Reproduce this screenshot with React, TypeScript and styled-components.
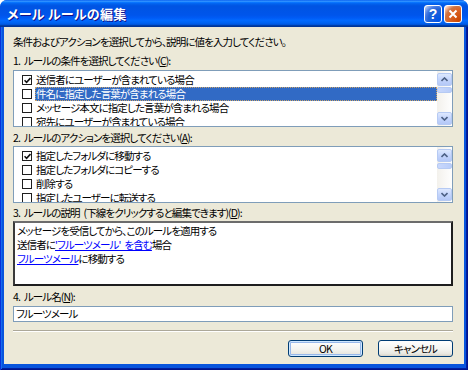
import styled, { createGlobalStyle } from 'styled-components';

const GlobalStyle = createGlobalStyle`
    html, body {
        margin: 0;
        padding: 0;
        background: #ffffff;
    }

    body {
        font-family: 'Noto Sans CJK JP', 'Liberation Sans', sans-serif;
        font-size: 10.5px;
        letter-spacing: -0.9px;
        word-spacing: 2.5px;
        font-feature-settings: 'palt';
        color: #000;
    }
`;

const Window = styled.div`
    width: 468px;
    height: 370px;
    display: flex;
    flex-direction: column;
    border-radius: 7px 7px 0 0;
    overflow: hidden;
    background: #0855dd;
`;

const TitleBar = styled.div`
    height: 27px;
    flex-shrink: 0;
    display: flex;
    align-items: center;
    gap: 2px;
    padding: 0 6px 0 7px;
    background: linear-gradient(
        180deg,
        #0058ee 0%,
        #3593ff 4%,
        #288eff 6%,
        #127dff 8%,
        #036ffc 10%,
        #0262ee 14%,
        #0057e5 20%,
        #0054e3 24%,
        #0055eb 56%,
        #005bf5 66%,
        #026afe 76%,
        #0062ef 86%,
        #0052d6 92%,
        #0040ab 94%,
        #003092 100%
    );
`;

const Title = styled.div`
    flex: 1;
    color: #fff;
    font-size: 13px;
    font-weight: bold;
    letter-spacing: 0.3px;
    word-spacing: 0;
    text-shadow: 1px 1px #0f1089;
`;

const CaptionButton = styled.div<{ $variant: 'help' | 'close' }>`
    width: 18px;
    height: 18px;
    box-sizing: border-box;
    border: 1px solid #fff;
    border-radius: 3px;
    display: flex;
    align-items: center;
    justify-content: center;
    color: #fff;
    font-family: 'Liberation Sans', sans-serif;
    font-size: 14px;
    font-weight: bold;
    letter-spacing: 0;
    background: ${({ $variant }) =>
        $variant === 'help'
            ? 'radial-gradient(circle at 90% 90%, #0054e9 0%, #2263d5 55%, #4479e4 70%, #a3bbec 90%, #fff 100%)'
            : 'radial-gradient(circle at 90% 90%, #cc4600 0%, #dc6527 55%, #cd7546 70%, #ffccb2 90%, #fff 100%)'};
`;

const Frame = styled.div`
    flex: 1;
    display: flex;
    padding: 0 4px 6px;
    background: #0855dd;
    box-shadow:
        inset 1px 0 #0831d9,
        inset -1px 0 #00138c,
        inset 0 -1px #00138c,
        inset 2px 0 #166aee,
        inset -2px 0 #001ea0,
        inset 0 -2px #001ea0;
`;

const Client = styled.div`
    flex: 1;
    display: flex;
    flex-direction: column;
    padding: 8px 11px 0 9px;
    background: #ece9d8;
`;

const Intro = styled.div`
    line-height: 14px;
    height: 14px;
`;

const Label = styled.div<{ $gap: number }>`
    margin-top: ${({ $gap }) => $gap}px;
    height: 14px;
    line-height: 14px;
    white-space: nowrap;
`;

const Key = styled.span`
    text-decoration: underline;
`;

const List = styled.div<{ $gap: number }>`
    margin-top: ${({ $gap }) => $gap}px;
    height: 57px;
    box-sizing: border-box;
    display: flex;
    border: 1px solid #7f9db9;
    background: #fff;
`;

const Items = styled.div`
    flex: 1;
    overflow: hidden;
    padding-top: 2px;
`;

const Row = styled.div`
    display: flex;
    align-items: center;
    height: 14px;
`;

const CheckBox = styled.span`
    width: 10px;
    height: 10px;
    box-sizing: border-box;
    flex-shrink: 0;
    margin: 0 3px 0 8px;
    display: flex;
    align-items: center;
    justify-content: center;
    border: 1px solid #1e1e1e;
    background: #fff;
`;

const ItemText = styled.span<{ $selected?: boolean }>`
    flex: 1;
    height: 14px;
    line-height: 14px;
    padding-left: 1px;
    white-space: nowrap;
    box-sizing: border-box;
    color: ${({ $selected }) => ($selected ? '#fff' : '#000')};
    background: ${({ $selected }) => ($selected ? '#316ac5' : 'transparent')};
    outline: ${({ $selected }) => ($selected ? '1px dotted #c9a36a' : 'none')};
    outline-offset: -1px;
`;

const ScrollBar = styled.div`
    width: 15px;
    flex-shrink: 0;
    display: flex;
    flex-direction: column;
    padding: 2px 0 1px;
    box-sizing: border-box;
    background: linear-gradient(90deg, #f3f1ec 0%, #fefefe 100%);
`;

const ScrollButton = styled.div`
    height: 13px;
    box-sizing: border-box;
    display: flex;
    align-items: center;
    justify-content: center;
    border: 1px solid #b6caf3;
    border-radius: 2px;
    background: linear-gradient(180deg, #dde8fe 0%, #c4d5fc 50%, #b4c8f7 100%);
`;

const Thumb = styled.div`
    height: 6px;
    margin-top: 1px;
    box-sizing: border-box;
    border: 1px solid #b6caf3;
    border-radius: 2px;
    background: linear-gradient(90deg, #c9d8fc, #b9cdf9);
`;

const Track = styled.div`
    flex: 1;
`;

const Description = styled.div`
    margin-top: 1px;
    height: 65px;
    box-sizing: border-box;
    padding: 1px 2px;
    border-style: solid;
    border-width: 2px;
    border-color: #6c6c6c #1e1e1e #1e1e1e #3a3a3a;
    background: #fff;
`;

const Line = styled.div`
    height: 14px;
    line-height: 14px;
    white-space: nowrap;
`;

const Link = styled.span`
    color: #0000ff;
    text-decoration: underline;
`;

const NameField = styled.div`
    margin-top: 2px;
    height: 16px;
    box-sizing: border-box;
    padding: 0 2px;
    line-height: 14px;
    border: 1px solid #7f9db9;
    background: #fff;
`;

const Separator = styled.div`
    margin-top: 8px;
    border-top: 1px solid #aca899;
    border-bottom: 1px solid #fff;
`;

const Buttons = styled.div`
    margin-top: 8px;
    display: flex;
    justify-content: flex-end;
    gap: 15px;
`;

const Button = styled.button<{ $default?: boolean }>`
    width: 75px;
    height: 17px;
    padding: 0;
    font: inherit;
    letter-spacing: inherit;
    line-height: 15px;
    color: #000;
    border: 1px solid #003c74;
    border-radius: 3px;
    background: linear-gradient(180deg, #fff 0%, #f4f4f0 55%, #e8e7e0 85%, #d6d0c5 100%);
    box-shadow: ${({ $default }) =>
        $default ? 'inset 0 0 0 1px #cee7ff, inset 0 0 0 2px #98b8ea' : 'none'};
`;

const Arrow = ({ up }: { up?: boolean }) => (
    <svg width="7" height="5" viewBox="0 0 7 5">
        <polyline
            points={up ? '0.5,4 3.5,1 6.5,4' : '0.5,1 3.5,4 6.5,1'}
            fill="none"
            stroke="#4d6185"
            strokeWidth="1.6"
        />
    </svg>
);

const Tick = () => (
    <svg width="7" height="7" viewBox="0 0 7 7">
        <polyline points="0.5,3.2 2.6,5.4 6.5,1" fill="none" stroke="#111" strokeWidth="1.6" />
    </svg>
);

const Close = () => (
    <svg width="10" height="10" viewBox="0 0 10 10">
        <path d="M1.5 1.5 L8.5 8.5 M8.5 1.5 L1.5 8.5" stroke="#fff" strokeWidth="2" />
    </svg>
);

type Item = { text: string; checked?: boolean; selected?: boolean };

const conditions: Item[] = [
    { text: '送信者にユーザーが含まれている場合', checked: true },
    { text: '件名に指定した言葉が含まれる場合', selected: true },
    { text: 'メッセージ本文に指定した言葉が含まれる場合' },
    { text: '宛先にユーザーが含まれている場合' },
];

const actions: Item[] = [
    { text: '指定したフォルダに移動する', checked: true },
    { text: '指定したフォルダにコピーする' },
    { text: '削除する' },
    { text: '指定したユーザーに転送する' },
];

const CheckList = ({ items, gap }: { items: Item[]; gap: number }) => (
    <List $gap={gap}>
        <Items>
            {items.map(item => (
                <Row key={item.text}>
                    <CheckBox>{item.checked && <Tick />}</CheckBox>
                    <ItemText $selected={item.selected}>{item.text}</ItemText>
                </Row>
            ))}
        </Items>
        <ScrollBar>
            <ScrollButton>
                <Arrow up />
            </ScrollButton>
            <Thumb />
            <Track />
            <ScrollButton>
                <Arrow />
            </ScrollButton>
        </ScrollBar>
    </List>
);

const App = () => (
    <>
        <GlobalStyle />
        <Window>
            <TitleBar>
                <Title>メール ルールの編集</Title>
                <CaptionButton $variant="help">?</CaptionButton>
                <CaptionButton $variant="close">
                    <Close />
                </CaptionButton>
            </TitleBar>
            <Frame>
                <Client>
                    <Intro>条件およびアクションを選択してから、説明に値を入力してください。</Intro>

                    <Label $gap={5}>
                        1. ルールの条件を選択してください(<Key>C</Key>):
                    </Label>
                    <CheckList items={conditions} gap={2} />

                    <Label $gap={4}>
                        2. ルールのアクションを選択してください(<Key>A</Key>):
                    </Label>
                    <CheckList items={actions} gap={1} />

                    <Label $gap={3}>
                        3. ルールの説明 (下線をクリックすると編集できます)(<Key>D</Key>):
                    </Label>
                    <Description>
                        <Line>メッセージを受信してから、このルールを適用する</Line>
                        <Line>
                            送信者に<Link>'フルーツメール' を含む</Link>場合
                        </Line>
                        <Line>
                            <Link>フルーツメール</Link>に移動する
                        </Line>
                    </Description>

                    <Label $gap={4}>
                        4. ルール名(<Key>N</Key>):
                    </Label>
                    <NameField>フルーツメール</NameField>

                    <Separator />
                    <Buttons>
                        <Button $default>OK</Button>
                        <Button>キャンセル</Button>
                    </Buttons>
                </Client>
            </Frame>
        </Window>
    </>
);

export default App;
